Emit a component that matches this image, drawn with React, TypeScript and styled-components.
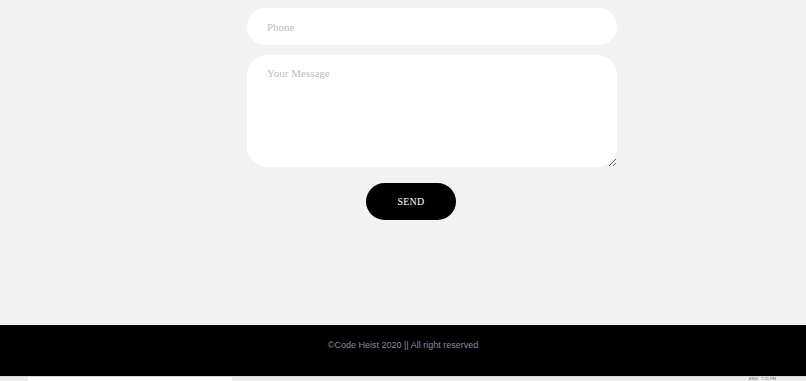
import React from "react";
import styled, { createGlobalStyle } from "styled-components";

const GlobalStyle = createGlobalStyle`
	html, body {
		margin: 0;
		padding: 0;
		background: #f2f2f2;
		overflow: hidden;
	}
	* {
		box-sizing: border-box;
	}
`;

const Page = styled.div`
	display: flex;
	flex-direction: column;
	height: 381px;
`;

const ContactSection = styled.main`
	height: 325px;
	padding-top: 8px;
	padding-left: 247px;
`;

const Form = styled.form`
	display: flex;
	flex-direction: column;
	width: 370px;
`;

const fieldStyles = `
	width: 100%;
	border: none;
	outline: none;
	background: #ffffff;
	font-family: "Liberation Serif", "Times New Roman", serif;
	font-size: 11px;
	color: #333;
	padding: 0 20px;
	&::placeholder {
		color: #bdbccd;
	}
`;

const Input = styled.input`
	${fieldStyles}
	height: 37px;
	border-radius: 19px;
`;

const TextArea = styled.textarea`
	${fieldStyles}
	display: block;
	height: 112px;
	margin-top: 10px;
	padding-top: 12px;
	border-radius: 20px;
	resize: vertical;
`;

const SendButton = styled.button`
	width: 90px;
	height: 37px;
	margin-top: 16px;
	margin-left: 119px;
	border: none;
	border-radius: 19px;
	background: #000000;
	color: #ffffff;
	font-family: "Liberation Serif", "Times New Roman", serif;
	font-size: 10px;
	letter-spacing: 0.2px;
	cursor: pointer;
`;

const Footer = styled.footer`
	height: 51px;
	background: #000000;
	padding-top: 15px;
	text-align: center;
`;

const FooterText = styled.p`
	margin: 0;
	font-family: "Liberation Sans", Arial, sans-serif;
	font-size: 9px;
	color: #878c9e;
`;

const Taskbar = styled.div`
	display: flex;
	align-items: center;
	height: 5px;
	background: #ececec;
	border-top: 1px solid #d6d6d6;
	overflow: hidden;
`;

const TaskbarSearch = styled.div`
	align-self: stretch;
	width: 204px;
	margin-left: 28px;
	background: #ffffff;
`;

const TaskbarClock = styled.span`
	margin-left: auto;
	margin-right: 30px;
	font-family: "Liberation Sans", Arial, sans-serif;
	font-size: 4px;
	line-height: 4px;
	color: #666;
`;

export default function App() {
	return (
		<>
			<GlobalStyle />
			<Page>
				<ContactSection>
					<Form onSubmit={(e) => e.preventDefault()}>
						<Input type="tel" placeholder="Phone" />
						<TextArea placeholder="Your Message" />
						<SendButton type="submit">SEND</SendButton>
					</Form>
				</ContactSection>
				<Footer>
					<FooterText>©Code Heist 2020 || All right reserved</FooterText>
				</Footer>
				<Taskbar>
					<TaskbarSearch />
					<TaskbarClock>ENG &nbsp; 7:21 PM</TaskbarClock>
				</Taskbar>
			</Page>
		</>
	);
}
